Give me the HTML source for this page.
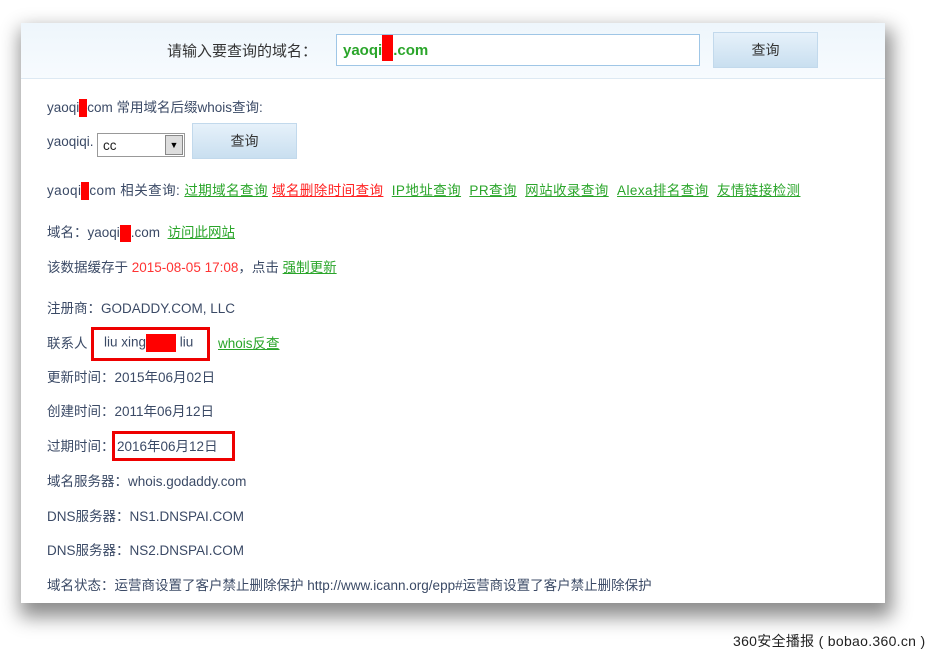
<!DOCTYPE html>
<html><head><meta charset="utf-8"><style>
body{margin:0;width:941px;height:659px;background:#fff;overflow:hidden;position:relative;font-family:"Liberation Sans","Noto Sans CJK SC",sans-serif;color:#3b4a66;font-size:13.5px}
.panel{position:absolute;left:21px;top:23px;width:864px;height:580px;background:#fff;box-shadow:3px 10px 18px 4px rgba(0,0,0,.45)}
.hdr{position:absolute;left:0;top:0;width:864px;height:55px;background:linear-gradient(#eef6fc,#f7fbfe);border-bottom:1px solid #dde9f3}
.t{position:absolute;white-space:nowrap}
a{color:#2aa52a;text-decoration:underline}
.red{background:#f00;display:inline-block;vertical-align:middle}
.btn{position:absolute;background:linear-gradient(#e6f1fa,#c9dff0);border:1px solid #c2d9ec;text-align:center;color:#333;font-size:14px}
.box{position:absolute;border:3px solid #e00}
</style></head><body>
<div class="panel">
<div class="hdr"></div>
<div class="t" style="left:146px;top:17px;font-size:15px;color:#333">请输入要查询的域名：</div>
<div style="position:absolute;left:315px;top:11px;width:362px;height:30px;border:1px solid #9fc6e6;background:#fff"></div>
<div class="t" style="left:322px;top:18px;font-size:15px;color:#2aa52a;font-weight:bold">yaoqi<span class="red" style="width:11px;height:26px;margin-top:-6px"></span>.com</div>
<div class="btn" style="left:692px;top:9px;width:103px;height:34px;line-height:34px">查询</div>

<div class="t" style="left:26px;top:73px">yaoqi<span class="red" style="width:8px;height:18px"></span>com 常用域名后缀whois查询:</div>
<div class="t" style="left:26px;top:111px">yaoqiqi.</div>
<div style="position:absolute;left:76px;top:110px;width:86px;height:22px;border:1px solid #999;background:#fff"><span style="position:absolute;left:5px;top:4px;color:#222">cc</span><span style="position:absolute;right:1px;top:1px;width:16px;height:18px;background:#ddd;border:1px solid #888;font-size:9px;text-align:center;line-height:18px;color:#000">▼</span></div>
<div class="btn" style="left:171px;top:100px;width:103px;height:34px;line-height:34px">查询</div>

<div class="t" style="left:26px;top:156px;letter-spacing:0.42px">yaoqi<span class="red" style="width:8px;height:18px"></span>com 相关查询: <a>过期域名查询</a> <a style="color:#f22">域名删除时间查询</a>&nbsp; <a>IP地址查询</a>&nbsp; <a>PR查询</a>&nbsp; <a>网站收录查询</a>&nbsp; <a>Alexa排名查询</a>&nbsp; <a>友情链接检测</a></div>

<div class="t" style="left:26px;top:198px">域名：yaoqi<span class="red" style="width:11px;height:17px"></span>.com&nbsp; <a>访问此网站</a></div>
<div class="t" style="left:26px;top:233px">该数据缓存于 <span style="color:#f33">2015-08-05 17:08</span>，点击 <a>强制更新</a></div>
<div class="t" style="left:26px;top:274px">注册商：GODADDY.COM, LLC</div>
<div class="t" style="left:26px;top:309px">联系人</div>
<div class="box" style="left:70px;top:304px;width:113px;height:28px"></div>
<div class="t" style="left:83px;top:311px">liu xing<span class="red" style="width:30px;height:18px"></span> liu</div>
<div class="t" style="left:197px;top:309px"><a>whois反查</a></div>
<div class="t" style="left:26px;top:343px">更新时间：2015年06月02日</div>
<div class="t" style="left:26px;top:377px">创建时间：2011年06月12日</div>
<div class="t" style="left:26px;top:412px">过期时间：</div>
<div class="box" style="left:91px;top:408px;width:117px;height:24px"></div>
<div class="t" style="left:96px;top:412px">2016年06月12日</div>
<div class="t" style="left:26px;top:447px">域名服务器：whois.godaddy.com</div>
<div class="t" style="left:26px;top:482px">DNS服务器：NS1.DNSPAI.COM</div>
<div class="t" style="left:26px;top:516px">DNS服务器：NS2.DNSPAI.COM</div>
<div class="t" style="left:26px;top:551px">域名状态：运营商设置了客户禁止删除保护 http://www.icann.org/epp#运营商设置了客户禁止删除保护</div>
</div>
<div class="t" style="left:733px;top:631px;font-size:14px;letter-spacing:0.3px;color:#222">360安全播报 ( bobao.360.cn )</div>
</body></html>
